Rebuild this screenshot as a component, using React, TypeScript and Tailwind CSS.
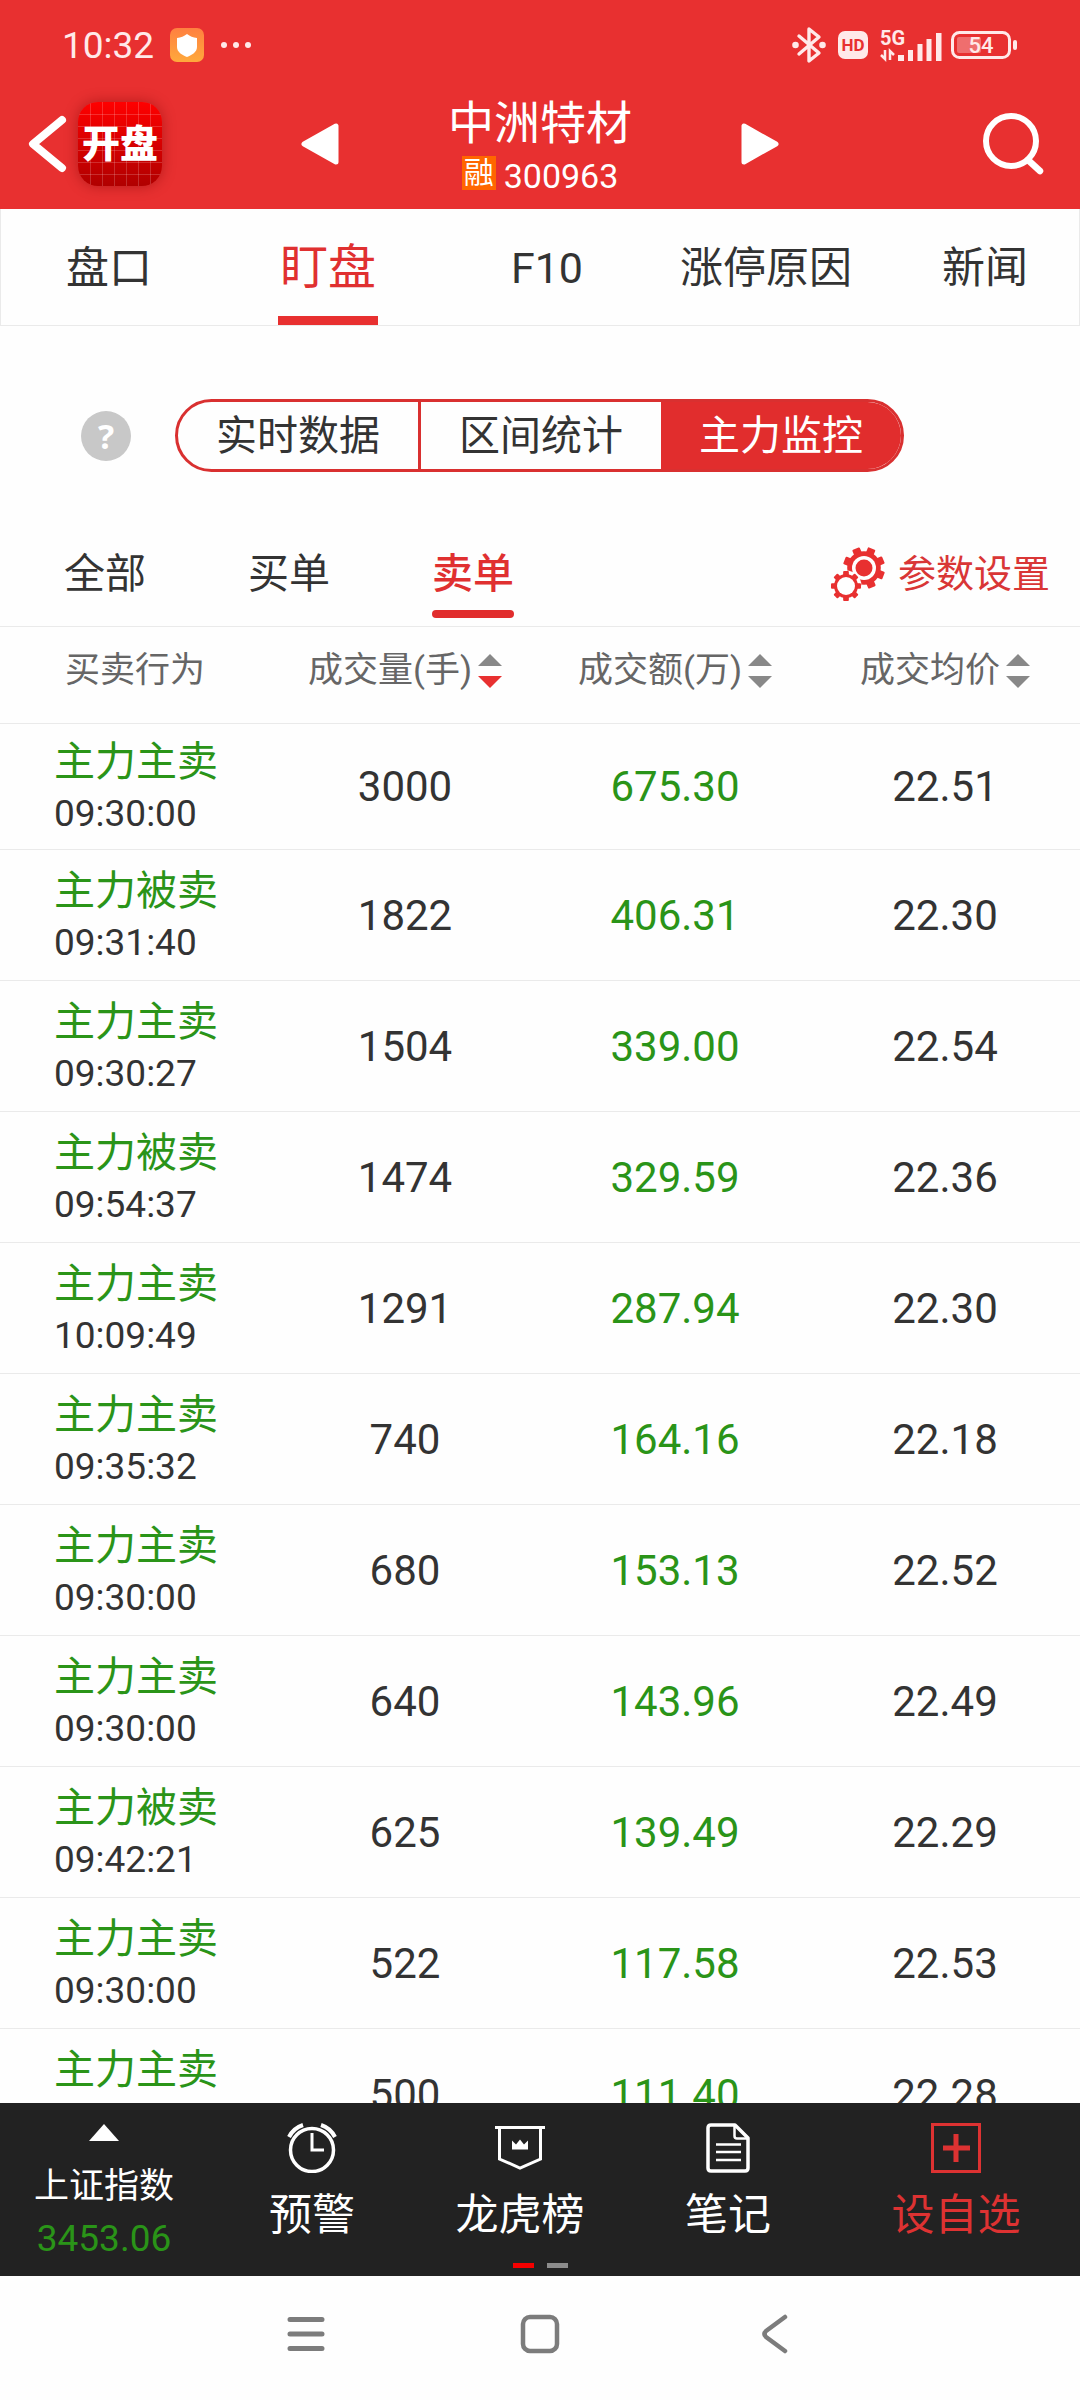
import { useState } from 'react'

const tabs = ['盘口', '盯盘', 'F10', '涨停原因', '新闻']
const modes = ['实时数据', '区间统计', '主力监控']
const filters = ['全部', '买单', '卖单']

const columns = [
  { label: '成交量(手)', sort: 'desc' },
  { label: '成交额(万)', sort: '' },
  { label: '成交均价', sort: '' },
]

const rows = [
  { type: '主力主卖', time: '09:30:00', volume: '3000', amount: '675.30', price: '22.51' },
  { type: '主力被卖', time: '09:31:40', volume: '1822', amount: '406.31', price: '22.30' },
  { type: '主力主卖', time: '09:30:27', volume: '1504', amount: '339.00', price: '22.54' },
  { type: '主力被卖', time: '09:54:37', volume: '1474', amount: '329.59', price: '22.36' },
  { type: '主力主卖', time: '10:09:49', volume: '1291', amount: '287.94', price: '22.30' },
  { type: '主力主卖', time: '09:35:32', volume: '740', amount: '164.16', price: '22.18' },
  { type: '主力主卖', time: '09:30:00', volume: '680', amount: '153.13', price: '22.52' },
  { type: '主力主卖', time: '09:30:00', volume: '640', amount: '143.96', price: '22.49' },
  { type: '主力被卖', time: '09:42:21', volume: '625', amount: '139.49', price: '22.29' },
  { type: '主力主卖', time: '09:30:00', volume: '522', amount: '117.58', price: '22.53' },
  { type: '主力主卖', time: '09:30:00', volume: '500', amount: '111.40', price: '22.28' },
]

function StatusBar() {
  return (
    <div className="flex h-[90px] items-center justify-between pr-[62px] pl-[62px] text-[#ffe9e9]">
      <div className="flex items-center">
        <span className="pt-[2px] text-[37px] leading-[40px]">10:32</span>
        <svg className="ml-4 h-[34px] w-[34px]" viewBox="0 0 34 34">
          <defs>
            <linearGradient id="shieldBg" x1="0" y1="0" x2="0" y2="1">
              <stop offset="0" stopColor="#ff8040" />
              <stop offset="1" stopColor="#ffa93c" />
            </linearGradient>
          </defs>
          <rect width="34" height="34" rx="7" fill="url(#shieldBg)" />
          <path d="M17 6c3 2.500 6 3.500 10 4v9c0 5-5 8-10 10C12 27 7 24 7 19v-9c4-.5 7-1.500 10-4z" fill="#fff" />
        </svg>
        <svg className="ml-4 h-2 w-8" viewBox="0 0 32 8" fill="currentColor">
          <circle cx="4" cy="4" r="3" />
          <circle cx="16" cy="4" r="3" />
          <circle cx="28" cy="4" r="3" />
        </svg>
      </div>
      <div className="flex items-center">
        <svg className="h-[38px] w-[34px]" viewBox="0 0 34 38" fill="none" stroke="currentColor" strokeWidth="3.400" strokeLinejoin="round" strokeLinecap="round">
          <path d="M7 10l20 17-10 8V3l10 8L7 28" />
          <circle cx="3.500" cy="19" r="1.600" fill="currentColor" />
          <circle cx="30.500" cy="19" r="1.600" fill="currentColor" />
        </svg>
        <span className="ml-3 flex h-[28px] w-[30px] items-center justify-center rounded-[7px] bg-[#ffe9e9] text-[17px] leading-[20px] font-bold text-[#e83030]">HD</span>
        <svg className="ml-3 h-[42px] w-[62px]" viewBox="0 0 62 42" fill="currentColor">
          <text x="0" y="21" fontSize="20" fontWeight="700">5G</text>
          <path d="M18 31h6v6h-6zM28 26h5v11h-5zM37.500 20h5v17h-5zM46.500 15h5v22h-5zM56 9h5.500v28H56z" />
          <path d="M5 26v9l-4-4M10 36v-9l4 4" fill="none" stroke="currentColor" strokeWidth="2.500" />
        </svg>
        <svg className="ml-2 h-[30px] w-[68px]" viewBox="0 0 68 30">
          <rect x="2.500" y="2.500" width="57" height="25" rx="7" fill="none" stroke="currentColor" strokeWidth="3" />
          <rect x="7" y="7" width="24" height="16" rx="2" fill="#fff" opacity=".3" />
          <rect x="63" y="10" width="4" height="10" rx="2" fill="currentColor" />
          <text x="31" y="23" fontSize="22" fontWeight="500" textAnchor="middle" fill="currentColor">54</text>
        </svg>
      </div>
    </div>
  )
}

function Header() {
  return (
    <header className="shrink-0 bg-[#e83030] text-white">
      <StatusBar />
      <div className="grid h-[119px] grid-cols-[1fr_auto_1fr] items-center pb-3">
        <div className="flex items-center pl-7">
          <button aria-label="返回">
            <svg className="h-[58px] w-[40px]" viewBox="0 0 40 58" fill="none" stroke="#fff" strokeWidth="8" strokeLinecap="round" strokeLinejoin="round">
              <path d="M34 5L5 29l29 24" />
            </svg>
          </button>
          <a href="#" className="relative ml-[10px] flex h-[84px] w-[84px] items-center justify-center overflow-hidden rounded-[20px] bg-linear-to-b from-[#ff0000] to-[#b00000] shadow-[0_0_14px_rgba(120,0,0,0.45)]">
            <svg className="absolute inset-0 h-full w-full" viewBox="0 0 84 84" stroke="#fff" strokeOpacity=".18" strokeWidth="1">
              <path d="M12.500 0v84M24.500 0v84M36.500 0v84M48.500 0v84M60.500 0v84M72.500 0v84M0 12.500h84M0 24.500h84M0 36.500h84M0 48.500h84M0 60.500h84M0 72.500h84" />
            </svg>
            <span className="relative text-[38px] leading-[42px] font-black whitespace-nowrap">开盘</span>
          </a>
        </div>
        <div className="flex w-[478px] items-center justify-between">
          <button aria-label="上一只">
            <svg className="h-[44px] w-[38px]" viewBox="0 0 38 44" fill="#fff" stroke="#fff" strokeWidth="5" strokeLinejoin="round">
              <path d="M35 4v36L3 22z" />
            </svg>
          </button>
          <div className="flex flex-col items-center pt-1">
            <h1 className="text-[46px] leading-[54px]">中洲特材</h1>
            <div className="flex items-center gap-2">
              <span className="flex h-[34px] w-[34px] items-center justify-center bg-[#ff6600] text-[30px] leading-[34px]">融</span>
              <span className="pt-[6px] text-[34px] leading-[40px]">300963</span>
            </div>
          </div>
          <button aria-label="下一只">
            <svg className="h-[44px] w-[38px]" viewBox="0 0 38 44" fill="#fff" stroke="#fff" strokeWidth="5" strokeLinejoin="round">
              <path d="M3 4v36l32-18z" />
            </svg>
          </button>
        </div>
        <button aria-label="搜索" className="mr-9 justify-self-end">
          <svg className="h-[62px] w-[62px]" viewBox="0 0 62 62" fill="none" stroke="#fff" strokeWidth="6">
            <circle cx="29" cy="28" r="25" />
            <path d="M46 47l12 11" strokeWidth="6.500" strokeLinecap="round" />
          </svg>
        </button>
      </div>
    </header>
  )
}

function Gear({ cx, cy, r, children }: { cx: number; cy: number; r: number; children: React.ReactNode }) {
  return (
    <g transform={`translate(${cx} ${cy})`}>
      {[0, 45, 90, 135, 180, 225, 270, 315].map(a => (
        <rect key={a} x={-r * 0.19} y={-r} width={r * 0.38} height={r} rx="1" transform={`rotate(${a + (r > 16 ? 22 : 0)})`} />
      ))}
      <circle r={r * 0.8} />
      {children}
    </g>
  )
}

function GearsIcon() {
  return (
    <svg className="h-[54px] w-[54px]" viewBox="0 0 54 54" fill="#e83030">
      <Gear cx={33} cy={21} r={21}>
        <circle r="12" fill="#fff" />
        <circle r="8.500" />
      </Gear>
      <circle cx="15" cy="39" r="15.500" fill="#fff" />
      <Gear cx={15} cy={39} r={15}>
        <circle r="9" fill="#fff" />
      </Gear>
    </svg>
  )
}

function SortIcon({ active }: { active: boolean }) {
  return (
    <svg className="h-[34px] w-6" viewBox="0 0 24 34" fill="#888">
      <path d="M12 0l12 12H0z" />
      <path d="M0 22h24L12 34z" fill={active ? '#e83030' : '#888'} />
    </svg>
  )
}

function Tabs() {
  const [tab, setTab] = useState('盯盘')
  return (
    <nav className="flex h-[117px] shrink-0 overflow-hidden border border-t-0 border-[#eaeaea]">
      {tabs.map(t => (
        <button key={t} onClick={() => setTab(t)} className="flex w-[219px] shrink-0 justify-center pr-[3px]">
          <span className={t === tab
            ? 'h-full border-b-[9px] border-[#e83030] px-[2px] text-[48px] leading-[118px] text-[#e03030]'
            : 'h-full text-[43px] leading-[118px]'}>
            {t}
          </span>
        </button>
      ))}
    </nav>
  )
}

function Controls() {
  const [mode, setMode] = useState('主力监控')
  const [filter, setFilter] = useState('卖单')
  return (
    <>
      <div className="flex items-center gap-[44px] pt-[73px] pl-[81px]">
        <button aria-label="帮助" className="flex h-[50px] w-[50px] items-center justify-center rounded-full bg-[#c8c8c8] font-['Open_Sans',sans-serif] text-[34px] leading-[50px] font-bold text-white">?</button>
        <div className="flex h-[73px] w-[729px] overflow-hidden rounded-full border-[3px] border-[#d93030]">
          {modes.map((m, i) => (
            <button
              key={m}
              onClick={() => setMode(m)}
              className={`flex-1 text-[41px] leading-[66px] ${i === 1 ? 'border-l-[3px] border-[#d93030]' : ''} ${m === mode ? 'bg-[#e12d2d] text-white' : ''}`}
            >
              {m}
            </button>
          ))}
        </div>
      </div>
      <div className="mt-[66px] flex h-[89px] justify-between border-b border-[#eaeaea] pr-[30px] pl-[64px]">
        <div className="flex gap-[102px]">
          {filters.map(f => (
            <button key={f} onClick={() => setFilter(f)} className="flex flex-col items-center">
              <span className={`text-[41px] leading-[72px] ${f === filter ? 'font-medium text-[#e03030]' : ''}`}>{f}</span>
              {f === filter && <span className="h-2 w-full rounded-full bg-[#e12d2d]" />}
            </button>
          ))}
        </div>
        <button className="flex h-[72px] items-center gap-[13px] text-[38px] leading-[72px] text-[#d93636]">
          <GearsIcon />
          参数设置
        </button>
      </div>
    </>
  )
}

function OrderTable() {
  return (
    <table className="w-full table-fixed border-collapse text-center">
      <thead>
        <tr className="h-[96px] border-b border-[#eaeaea] text-[35px] leading-[44px] text-[#666]">
          <th className="pb-[8px] pl-[65px] text-left font-normal">买卖行为</th>
          {columns.map(c => (
            <th key={c.label} className="pb-[8px] font-normal">
              <button className="inline-flex items-center gap-[6px]">
                {c.label}
                <SortIcon active={c.sort === 'desc'} />
              </button>
            </th>
          ))}
        </tr>
      </thead>
      <tbody>
        {rows.map((r, i) => (
          <tr key={i} className="h-[131px] border-b border-[#eaeaea] text-[42px] leading-[52px] first:h-[126px]">
            <td className="pt-1 pl-[54px] text-left">
              <div className="text-[41px] text-[#2a9418]">{r.type}</div>
              <div className="text-[37px]">{r.time}</div>
            </td>
            <td className="pt-[2px]">{r.volume}</td>
            <td className="pt-[2px] text-[#2a9418]">{r.amount}</td>
            <td className="pt-[2px]">{r.price}</td>
          </tr>
        ))}
      </tbody>
    </table>
  )
}

function BottomBar() {
  return (
    <footer className="relative grid h-[173px] shrink-0 grid-cols-[208fr_208fr_208fr_208fr_248fr] bg-[#222] text-[43px] leading-[60px] text-white">
      <button className="flex flex-col items-center pt-[21px]">
        <svg className="h-[17px] w-[30px]" viewBox="0 0 30 17" fill="#fff">
          <path d="M15 0l15 17H0z" />
        </svg>
        <span className="mt-5 text-[35px] leading-[52px]">上证指数</span>
        <span className="text-[37px] leading-[52px] text-[#2a9418]">3453.06</span>
      </button>
      <button className="flex flex-col items-center gap-[12px] pt-5">
        <svg className="h-[50px] w-[50px]" viewBox="0 0 50 50" fill="none" stroke="#fff" strokeWidth="3">
          <circle cx="25" cy="27" r="21.500" strokeWidth="3.500" />
          <path d="M25 10v17h12" />
          <path d="M2 14C5 8 10 4 16 2M48 14C45 8 40 4 34 2" strokeWidth="4" />
        </svg>
        预警
      </button>
      <button className="flex flex-col items-center gap-[12px] pt-5">
        <svg className="h-[50px] w-[52px]" viewBox="0 0 52 50" fill="none" stroke="#fff" strokeWidth="3">
          <path d="M1 4.500h50M5.500 5v31L26 45l20.500-9V5" />
          <path d="M18 26.500v-9l4 4 4-5 4 5 4-4v9z" fill="#fff" stroke="none" />
        </svg>
        龙虎榜
      </button>
      <button className="flex flex-col items-center gap-[12px] pt-5">
        <svg className="h-[50px] w-[44px]" viewBox="0 0 44 50" fill="none" stroke="#fff" strokeWidth="3.500" strokeLinejoin="round">
          <path d="M5 2h24l13 13v30q0 3-3 3H5q-3 0-3-3V5q0-3 3-3z" />
          <path d="M28.500 2v11q0 2.500 2.500 2.500h11" strokeWidth="2.500" />
          <path d="M10 21.500h25M10 29h25M10 37h25" strokeWidth="2.500" />
        </svg>
        笔记
      </button>
      <button className="flex flex-col items-center gap-[12px] pt-5 text-[#dd3232]">
        <svg className="h-[50px] w-[50px]" viewBox="0 0 50 50" fill="none" stroke="currentColor" strokeWidth="3">
          <path d="M1.500 1.500h47v47h-47z" />
          <path d="M25 11v28M12 25h27" strokeWidth="5" />
        </svg>
        设自选
      </button>
      <div className="absolute inset-x-0 bottom-2 flex justify-center gap-[13px]">
        <span className="h-[5px] w-[21px] bg-[#f40000]" />
        <span className="h-[5px] w-[21px] bg-[#8c8c8c]" />
      </div>
    </footer>
  )
}

function SystemNav() {
  return (
    <div className="flex h-[124px] shrink-0 items-center justify-center pb-2">
      <button aria-label="菜单" className="flex w-[234px] justify-center">
        <svg className="h-10 w-10" viewBox="0 0 40 40" fill="none" stroke="#7c7c7c" strokeWidth="5" strokeLinecap="round">
          <path d="M4 5.500h32M4 20h32M4 34.500h32" />
        </svg>
      </button>
      <button aria-label="主页" className="flex w-[234px] justify-center">
        <svg className="h-10 w-10" viewBox="0 0 40 40" fill="none" stroke="#7c7c7c" strokeWidth="4.500">
          <rect x="3" y="3" width="34" height="34" rx="7" />
        </svg>
      </button>
      <button aria-label="后退" className="flex w-[234px] justify-center">
        <svg className="h-10 w-10" viewBox="0 0 40 40" fill="none" stroke="#7c7c7c" strokeWidth="4.500" strokeLinecap="round" strokeLinejoin="round">
          <path d="M31 3L12 17q-3 3 0 6l19 14" />
        </svg>
      </button>
    </div>
  )
}

export default function App() {
  return (
    <div className="flex h-screen flex-col bg-[#fefefe] font-[Roboto,'Noto_Sans_CJK_SC',sans-serif] text-[#333]">
      <Header />
      <Tabs />
      <main className="min-h-0 flex-1 overflow-hidden">
        <Controls />
        <OrderTable />
      </main>
      <BottomBar />
      <SystemNav />
    </div>
  )
}
